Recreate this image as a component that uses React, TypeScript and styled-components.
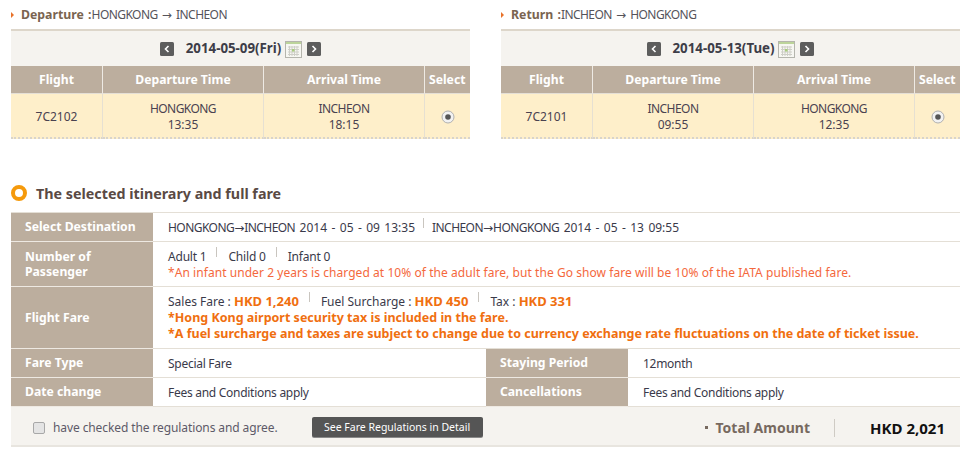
import React from "react";
import styled, { createGlobalStyle } from "styled-components";

const Global = createGlobalStyle`
  html, body { margin: 0; padding: 0; background: #fff; }
  body { font-family: "Noto Sans", "Liberation Sans", sans-serif; font-size: 12px; color: #3a3a4a; }
  * { box-sizing: border-box; }
`;

const Page = styled.div`
  width: 967px;
  height: 452px;
  overflow: hidden;
  padding: 0 7px 0 11px;
`;

const Top = styled.div`
  display: flex;
  gap: 31px;
`;

const Panel = styled.section`
  width: 459px;
`;

const RouteTitle = styled.div`
  height: 29px;
  padding: 7px 0 0 10px;
  font-size: 12px;
  line-height: 16px;
  word-spacing: 1px;
  color: #55535a;
  position: relative;
  white-space: pre;
  &::before {
    content: "";
    position: absolute;
    left: 0;
    top: 12px;
    border-left: 3px solid #e8722a;
    border-top: 3px solid transparent;
    border-bottom: 3px solid transparent;
  }
`;

const RouteLabel = styled.b`
  color: #7a6450;
  font-size: 12.3px;
`;

const Place = styled.span`
  letter-spacing: -0.55px;
`;

const Arrow = styled.span`
  font-family: "DejaVu Sans", sans-serif;
  font-size: 12px;
  letter-spacing: 0;
`;

const Stamp = styled.span`
  word-spacing: 1.3px;
`;

const DateBar = styled.div`
  height: 37px;
  background: #f5f3ef;
  border-top: 2px solid #ddd6ca;
  display: flex;
  align-items: center;
  justify-content: center;
`;

const DateText = styled.b`
  font-size: 13.3px;
  color: #3d3d48;
  margin: 0 4px 2px 12px;
`;

const NavBtn = styled.svg`
  width: 14px;
  height: 14px;
  display: block;
  margin-top: 1px;
`;

const CalIcon = styled.svg`
  width: 17px;
  height: 17px;
  display: block;
  margin: 2px 5px 0 0;
`;

const FlightGrid = styled.div`
  display: grid;
  grid-template-columns: 92px 161px 161px 45px;
`;

const HeadCell = styled.div`
  height: 28px;
  background: #bcae9e;
  color: #fff;
  font-weight: 700;
  font-size: 12.2px;
  display: flex;
  align-items: center;
  justify-content: center;
  white-space: nowrap;
  border-bottom: 1px solid #e4dfd6;
  border-right: 1px solid #eeeae4;
  &:nth-child(4) { border-right: 0; justify-content: flex-start; padding-left: 4px; }
`;

const BodyCell = styled.div`
  height: 45px;
  padding-top: 2px;
  background: #feefca;
  color: #4a4250;
  font-size: 12px;
  line-height: 16px;
  display: flex;
  align-items: center;
  justify-content: center;
  text-align: center;
  border-right: 1px solid #e6e0d2;
  border-bottom: 2px dotted #d8d4cc;
  &:nth-child(8) { border-right: 0; }
`;

const Radio = styled.svg`
  width: 14px;
  height: 14px;
  display: block;
`;

const Heading = styled.h2`
  margin: 41px 0 0 0;
  height: 32px;
  display: flex;
  align-items: center;
  gap: 9px;
  padding: 0 0 6px 0;
  font-size: 14.3px;
  font-weight: 700;
  color: #5a4a44;
`;

const Dot = styled.span`
  width: 16px;
  height: 16px;
  border-radius: 50%;
  border: 4px solid #f59a0c;
  background: #fff;
  flex: none;
`;

const Fare = styled.div`
  border-top: 1px solid #e4dfd6;
  width: 949px;
`;

const Row = styled.div<{ $h: number }>`
  display: flex;
  height: ${(p) => p.$h}px;
  border-bottom: 1px solid #e4dfd6;
`;

const Label = styled.div<{ $lift?: boolean }>`
  width: 142px;
  flex: none;
  background: #bcae9e;
  color: #fff;
  font-weight: 700;
  font-size: 12.2px;
  line-height: 15px;
  padding: 0 14px ${(p) => (p.$lift ? "2px" : "0")};
  display: flex;
  align-items: center;
  margin-bottom: -1px;
  border-bottom: 1px solid #eee9e2;
`;

const Value = styled.div<{ $flush?: boolean }>`
  flex: 1;
  padding: ${(p) => (p.$flush ? "0" : "2px")} 15px 0;
  font-size: 12px;
  line-height: 16px;
  color: #3a3a4a;
  display: flex;
  flex-direction: column;
  justify-content: center;
  white-space: nowrap;
`;

const Plain = styled(Value)`
  letter-spacing: -0.28px;
`;

const HalfValue = styled(Plain)`
  flex: none;
  width: 333px;
`;

const Counts = styled.div`
  letter-spacing: -0.2px;
`;

const Sep = styled.span<{ $tight?: boolean }>`
  display: inline-block;
  width: 1px;
  height: 10px;
  background: #c9c5bf;
  margin: ${(p) => (p.$tight ? "0 8px 0 8px" : "0 11px 0 10px")};
  position: relative;
  top: -4px;
`;

const Note = styled.div<{ $strong?: boolean }>`
  color: ${(p) => (p.$strong ? "#f06f10" : "#f4683c")};
  font-weight: ${(p) => (p.$strong ? 700 : 400)};
  font-size: ${(p) => (p.$strong ? "12.5px" : "12px")};
  letter-spacing: ${(p) => (p.$strong ? "0" : "0.06px")};
`;

const Price = styled.b`
  color: #f06f10;
  font-size: 13px;
`;

const Footer = styled.div`
  height: 40px;
  background: #f5f3ef;
  border-bottom: 2px solid #e8e5df;
  display: flex;
  align-items: center;
  padding: 3px 0 0 22px;
`;

const Check = styled.span`
  width: 12px;
  height: 12px;
  border: 1px solid #a8a8a8;
  border-radius: 2px;
  background: #e4e4e4;
  flex: none;
`;

const AgreeText = styled.span`
  margin-left: 8px;
  color: #5d5a68;
  letter-spacing: -0.1px;
`;

const DetailBtn = styled.button`
  margin: -2px 0 0 34px;
  width: 171px;
  height: 20px;
  padding: 0;
  border: 0;
  border-radius: 2px;
  background: #555;
  box-shadow: 0 1px 0 #8a8a8a;
  color: #fff;
  font-family: "Noto Sans", sans-serif;
  font-size: 10.5px;
`;

const Total = styled.div`
  margin-left: auto;
  display: flex;
  align-items: center;
  height: 18px;
`;

const TotalLabel = styled.b`
  font-size: 14px;
  color: #77695f;
  padding: 0 24px 0 11px;
  border-right: 1px solid #cfcbc4;
  line-height: 18px;
  position: relative;
  &::before {
    content: "";
    position: absolute;
    left: 0;
    top: 7px;
    width: 3px;
    height: 3px;
    background: #77695f;
  }
`;

const TotalValue = styled.b`
  font-size: 15px;
  color: #111;
  width: 125px;
  text-align: right;
  padding-right: 15px;
`;

function Nav({ dir }: { dir: "prev" | "next" }) {
  return (
    <NavBtn viewBox="0 0 14 14">
      <rect x="0" y="0" width="14" height="14" rx="1.5" fill="#5d5d5d" />
      <path d={dir === "prev" ? "M8.5 4 L5.5 7 L8.5 10" : "M5.5 4 L8.5 7 L5.5 10"} fill="none" stroke="#fff" strokeWidth="1.6" />
    </NavBtn>
  );
}

function Calendar() {
  return (
    <CalIcon viewBox="0 0 17 17">
      <rect x="0.5" y="0.5" width="16" height="16" fill="#f7f7f2" stroke="#b5b5ad" />
      <rect x="1" y="1" width="15" height="2" fill="#bcd49a" />
      <path d="M3 6h11M3 8.500h11M3 11h11M3 13.500h11M4.500 5v10M7 5v10M9.500 5v10M12 5v10" stroke="#cfcfc8" strokeWidth="1" />
      <rect x="7" y="8" width="2.500" height="2.500" fill="#a8cc7c" />
    </CalIcon>
  );
}

function RadioMark() {
  return (
    <Radio viewBox="0 0 14 14">
      <circle cx="7" cy="7" r="6" fill="#f2f2f2" stroke="#b0b0b0" />
      <circle cx="7" cy="7" r="2.8" fill="#555" />
    </Radio>
  );
}

const Arr = () => <Arrow>→</Arrow>;

type Leg = { label: string; a: string; b: string; date: string; no: string; dep: string; arr: string };

const legs: Leg[] = [
  { label: "Departure :", a: "HONGKONG", b: "INCHEON", date: "2014-05-09(Fri)", no: "7C2102", dep: "13:35", arr: "18:15" },
  { label: "Return :", a: "INCHEON", b: "HONGKONG", date: "2014-05-13(Tue)", no: "7C2101", dep: "09:55", arr: "12:35" },
];

export default function App() {
  return (
    <Page>
      <Global />
      <Top>
        {legs.map((l) => (
          <Panel key={l.no}>
            <RouteTitle>
              <RouteLabel>{l.label}</RouteLabel>
              <Place>{l.a}</Place> <Arr /> <Place>{l.b}</Place>
            </RouteTitle>
            <DateBar>
              <Nav dir="prev" />
              <DateText>{l.date}</DateText>
              <Calendar />
              <Nav dir="next" />
            </DateBar>
            <FlightGrid>
              <HeadCell>Flight</HeadCell>
              <HeadCell>Departure Time</HeadCell>
              <HeadCell>Arrival Time</HeadCell>
              <HeadCell>Select</HeadCell>
              <BodyCell>{l.no}</BodyCell>
              <BodyCell><div><Place>{l.a}</Place><br />{l.dep}</div></BodyCell>
              <BodyCell><div><Place>{l.b}</Place><br />{l.arr}</div></BodyCell>
              <BodyCell><RadioMark /></BodyCell>
            </FlightGrid>
          </Panel>
        ))}
      </Top>
      <Heading><Dot />The selected itinerary and full fare</Heading>
      <Fare>
        <Row $h={29}>
          <Label $lift>Select Destination</Label>
          <Value>
            <div><Place>HONGKONG</Place><Arr /><Place>INCHEON</Place><Stamp> 2014 - 05 - 09 13:35</Stamp><Sep $tight /><Place>INCHEON</Place><Arr /><Place>HONGKONG</Place><Stamp> 2014 - 05 - 13 09:55</Stamp></div>
          </Value>
        </Row>
        <Row $h={45}>
          <Label>Number of<br />Passenger</Label>
          <Value>
            <Counts>Adult 1<Sep />Child 0<Sep />Infant 0</Counts>
            <Note>*An infant under 2 years is charged at 10% of the adult fare, but the Go show fare will be 10% of the IATA published fare.</Note>
          </Value>
        </Row>
        <Row $h={62}>
          <Label>Flight Fare</Label>
          <Value $flush>
            <div>Sales Fare : <Price>HKD 1,240</Price><Sep />Fuel Surcharge : <Price>HKD 450</Price><Sep />Tax : <Price>HKD 331</Price></div>
            <Note $strong>*Hong Kong airport security tax is included in the fare.</Note>
            <Note $strong>*A fuel surcharge and taxes are subject to change due to currency exchange rate fluctuations on the date of ticket issue.</Note>
          </Value>
        </Row>
        <Row $h={29}>
          <Label $lift>Fare Type</Label>
          <HalfValue>Special Fare</HalfValue>
          <Label $lift>Staying Period</Label>
          <Plain>12month</Plain>
        </Row>
        <Row $h={29}>
          <Label $lift>Date change</Label>
          <HalfValue>Fees and Conditions apply</HalfValue>
          <Label $lift>Cancellations</Label>
          <Plain>Fees and Conditions apply</Plain>
        </Row>
        <Footer>
          <Check />
          <AgreeText>have checked the regulations and agree.</AgreeText>
          <DetailBtn>See Fare Regulations in Detail</DetailBtn>
          <Total>
            <TotalLabel>Total Amount</TotalLabel>
            <TotalValue>HKD 2,021</TotalValue>
          </Total>
        </Footer>
      </Fare>
    </Page>
  );
}
